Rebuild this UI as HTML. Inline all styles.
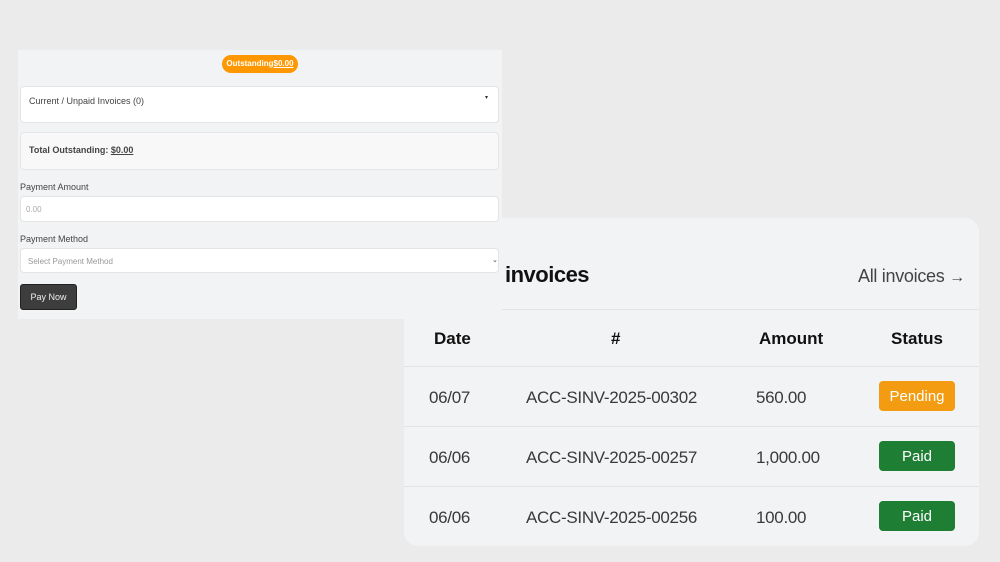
<!DOCTYPE html>
<html><head><style>
*{box-sizing:border-box;margin:0;padding:0}
body{width:1000px;height:562px;background:#ebebeb;font-family:"Liberation Sans",sans-serif;position:relative;overflow:hidden}
.a{position:absolute}
.card{left:404px;top:218px;width:575px;height:328px;background:#f2f3f5;border-radius:14px}
.line{height:1px;background:#e2e3e6;left:404px;width:575px}
.th{font-weight:bold;font-size:17px;color:#111;top:329px}
.td{font-size:17px;color:#3a3a3a;letter-spacing:-0.3px}
.badge{left:879px;width:76px;height:30px;border-radius:4px;color:#fff;font-size:15px;text-align:center;line-height:32px}
.panel{left:18px;top:50px;width:484px;height:269px;background:#f2f3f5}
.box{background:#fff;border:1px solid #e3e4e6;border-radius:4px}
.sm{font-size:9px;color:#444}
</style></head><body>
<div class="a card"></div>
<div class="a" style="left:505px;top:262px;font-size:22px;font-weight:bold;color:#111;letter-spacing:-0.5px">invoices</div>
<div class="a" style="left:858px;top:266px;font-size:18px;color:#444;white-space:nowrap;letter-spacing:-0.3px">All invoices <span style="font-size:16px">→</span></div>
<div class="a line" style="top:309px"></div>
<div class="a th" style="left:434px">Date</div>
<div class="a th" style="left:611px">#</div>
<div class="a th" style="left:759px">Amount</div>
<div class="a th" style="left:891px">Status</div>
<div class="a line" style="top:366px"></div>
<div class="a line" style="top:426px"></div>
<div class="a line" style="top:486px"></div>
<div class="a td" style="left:429px;top:388px">06/07</div>
<div class="a td" style="left:526px;top:388px">ACC-SINV-2025-00302</div>
<div class="a td" style="left:756px;top:388px">560.00</div>
<div class="a badge" style="top:381px;background:#f39c12">Pending</div>
<div class="a td" style="left:429px;top:448px">06/06</div>
<div class="a td" style="left:526px;top:448px">ACC-SINV-2025-00257</div>
<div class="a td" style="left:756px;top:448px">1,000.00</div>
<div class="a badge" style="top:441px;background:#1e7e34">Paid</div>
<div class="a td" style="left:429px;top:508px">06/06</div>
<div class="a td" style="left:526px;top:508px">ACC-SINV-2025-00256</div>
<div class="a td" style="left:756px;top:508px">100.00</div>
<div class="a badge" style="top:501px;background:#1e7e34">Paid</div>

<div class="a panel"></div>
<div class="a" style="left:222px;top:55px;width:76px;height:18px;border-radius:9px;background:#ff9800;color:#fff;font-size:8px;font-weight:bold;text-align:center;line-height:18px">Outstanding<u>$0.00</u></div>
<div class="a box" style="left:20px;top:86px;width:479px;height:37px"></div>
<div class="a sm" style="left:29px;top:96px">Current / Unpaid Invoices (0)</div>
<div class="a" style="left:485px;top:94px;font-size:6px;color:#333">▾</div>
<div class="a" style="left:20px;top:132px;width:479px;height:38px;background:#f8f8f8;border:1px solid #e6e6e8;border-radius:4px"></div>
<div class="a sm" style="left:29px;top:145px;font-weight:bold">Total Outstanding: <u>$0.00</u></div>
<div class="a sm" style="left:20px;top:182px">Payment Amount</div>
<div class="a box" style="left:20px;top:196px;width:479px;height:26px"></div>
<div class="a" style="left:26px;top:205px;font-size:8px;color:#aaa">0.00</div>
<div class="a sm" style="left:20px;top:234px">Payment Method</div>
<div class="a box" style="left:20px;top:248px;width:479px;height:25px"></div>
<div class="a" style="left:28px;top:257px;font-size:8px;color:#999">Select Payment Method</div>
<div class="a" style="left:492px;top:256px;font-size:7px;color:#444">⌄</div>
<div class="a" style="left:20px;top:284px;width:57px;height:26px;background:#3d3d3d;border:1px solid #222;border-radius:3px;color:#eee;font-size:9px;text-align:center;line-height:25px">Pay Now</div>
</body></html>
